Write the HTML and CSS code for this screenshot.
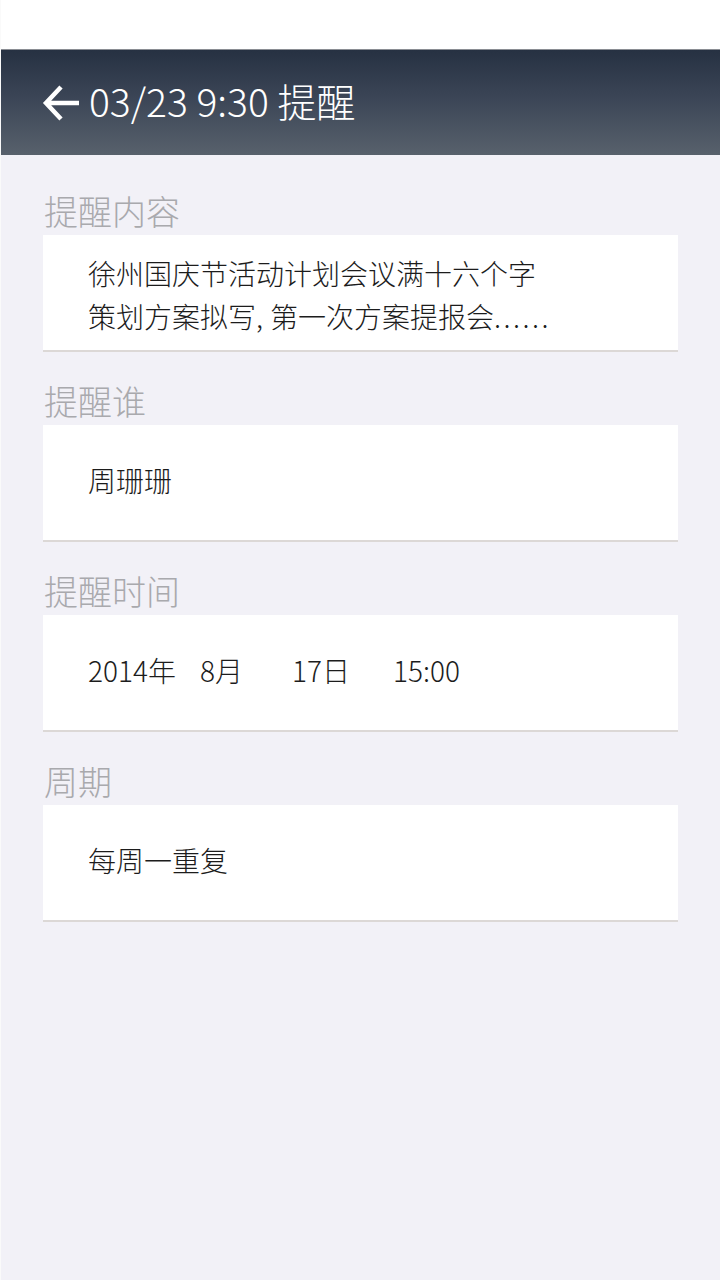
FILE: index.html
```html
<!DOCTYPE html>
<html lang="zh-CN">
<head>
<meta charset="utf-8">
<link rel="stylesheet" href="styles.css">
</head>
<body>
<div class="app">
  <div class="statusbar"></div>
  <header class="topbar">
    <svg class="back" width="40" height="40" viewBox="0 0 40 40">
      <path d="M4 20 H37 M19 4 L4 20 L19 36" fill="none" stroke="#fff" stroke-width="4.5" stroke-linecap="butt" stroke-linejoin="miter"/>
    </svg>
    <h1 class="title">03/23 9:30 提醒</h1>
  </header>
  <main class="content">
    <section class="group first">
      <div class="label">提醒内容</div>
      <div class="card multi">
        <p>徐州国庆节活动计划会议满十六个字<br>策划方案拟写<span class="comma">,</span>第一次方案提报会<span class="dots">......</span></p>
      </div>
    </section>
    <section class="group">
      <div class="label">提醒谁</div>
      <div class="card"><p>周珊珊</p></div>
    </section>
    <section class="group">
      <div class="label">提醒时间</div>
      <div class="card">
        <div class="date">
          <span>2014年</span><span>8月</span><span>17日</span><span>15:00</span>
        </div>
      </div>
    </section>
    <section class="group">
      <div class="label">周期</div>
      <div class="card"><p>每周一重复</p></div>
    </section>
  </main>
</div>
</body>
</html>
```
FILE: styles.css
```css
* { box-sizing: border-box; }
html, body { margin: 0; padding: 0; }
body {
  width: 720px;
  height: 1280px;
  background: #f2f1f7;
  font-family: "Noto Sans CJK SC", "Noto Sans", sans-serif;
  font-weight: 300;
  overflow: hidden;
}
.app {
  width: 720px;
  height: 1280px;
  border-left: 1px solid #fafafa;
  background: #f2f1f7;
}
.statusbar {
  height: 50px;
  background: #fff;
  border-bottom: 1px solid #8a8d93;
}
.topbar {
  height: 105px;
  background: linear-gradient(to bottom, #263142 0%, #3b4556 45%, #58616c 100%);
  display: flex;
  align-items: center;
  padding-left: 41px;
  gap: 7px;
}
.back { display: block; }
.title {
  margin: 0;
  color: #fff;
  font-size: 39px;
  font-weight: 300;
  line-height: 1;
  margin-top: -4px;
}
.content {
  padding: 0 42px;
}
.label {
  height: 73px;
  display: flex;
  align-items: flex-end;
  padding-bottom: 4px;
  font-size: 34px;
  line-height: 40px;
  color: #a9a9ad;
  padding-left: 1px;
}
.group.first .label { height: 80px; }
.card {
  background: #fff;
  height: 117px;
  border-bottom: 2px solid #dcd8d6;
  padding-left: 45px;
  padding-top: 35px;
}
.card p {
  margin: 0;
  font-size: 28px;
  line-height: 40px;
  color: #1c1c1c;
}
.card.multi { padding-top: 17px; }
.card.multi p { line-height: 43px; }
.comma { margin-right: 7px; }
.dots { letter-spacing: 2.5px; }
.date {
  display: grid;
  grid-template-columns: 112px 92px 101px auto;
  font-size: 28px;
  line-height: 40px;
  color: #1c1c1c;
}
```
